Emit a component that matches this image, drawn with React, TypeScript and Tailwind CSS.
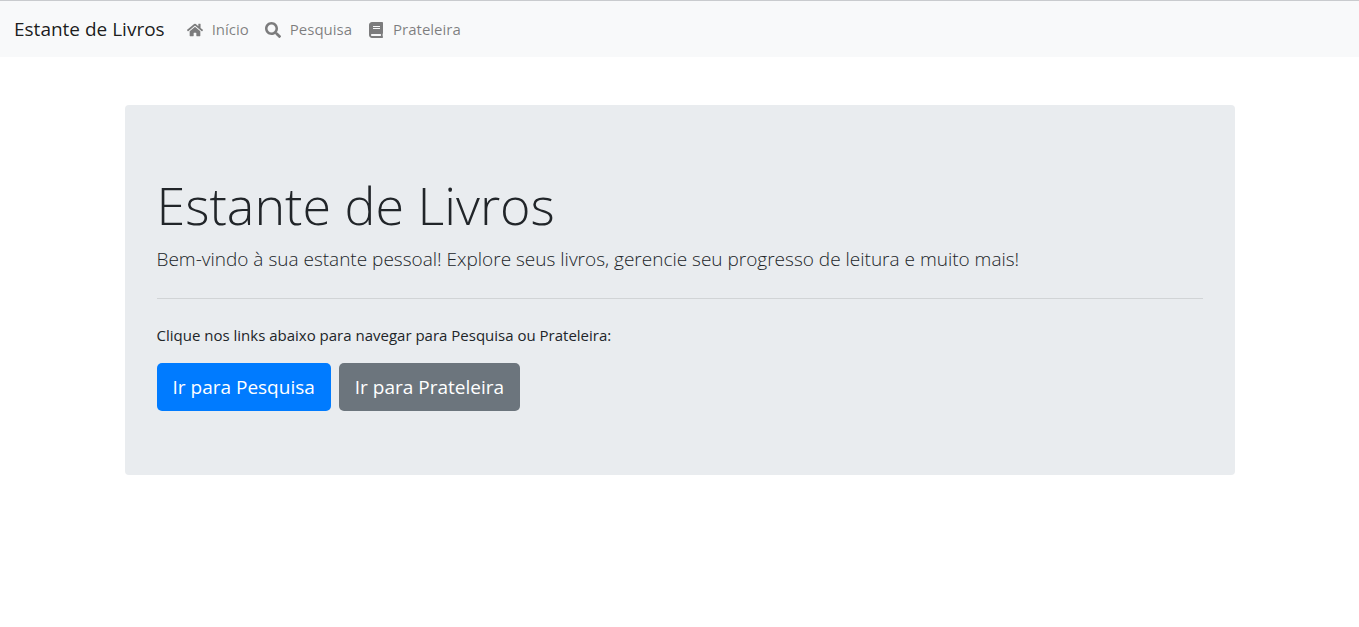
import { FaBook, FaHome, FaSearch } from "react-icons/fa";

const links = [
  { label: "Início", icon: FaHome },
  { label: "Pesquisa", icon: FaSearch },
  { label: "Prateleira", icon: FaBook },
];

export default function App() {
  return (
    <div className="min-h-screen bg-white font-['Open_Sans','Noto_Sans',sans-serif] text-[#212529]">
      <nav className="flex h-[57px] items-center border-t border-[#c9cbce] bg-[#f8f9fa] px-3.5">
        <a href="#" className="mr-[22px] text-[19px] text-black/90">Estante de Livros</a>
        <ul className="flex gap-4">
          {links.map(({ label, icon: Icon }) => (
            <li key={label}>
              <a href="#" className="flex items-center gap-[9px] text-[15px] text-black/50">
                <Icon aria-hidden="true" className="mt-0.5 size-4" />
                {label}
              </a>
            </li>
          ))}
        </ul>
      </nav>
      <main className="mx-auto mt-12 max-w-[1110px] rounded bg-[#e9ecef] px-8 py-16">
        <h1 className="mb-1 text-[52px] leading-[72px] font-light">Estante de Livros</h1>
        <p className="mb-6 text-[19px] leading-[29px] font-light">
          Bem-vindo à sua estante pessoal! Explore seus livros, gerencie seu progresso de leitura e muito mais!
        </p>
        <hr className="my-6 border-black/10" />
        <p className="mb-4 text-[15px] leading-6">
          Clique nos links abaixo para navegar para Pesquisa ou Prateleira:
        </p>
        <div className="flex gap-2">
          <a href="#" className="rounded-[5px] bg-[#007bff] px-4 py-2.5 text-[19px] leading-7 text-white">Ir para Pesquisa</a>
          <a href="#" className="rounded-[5px] bg-[#6c757d] px-4 py-2.5 text-[19px] leading-7 text-white">Ir para Prateleira</a>
        </div>
      </main>
    </div>
  );
}
